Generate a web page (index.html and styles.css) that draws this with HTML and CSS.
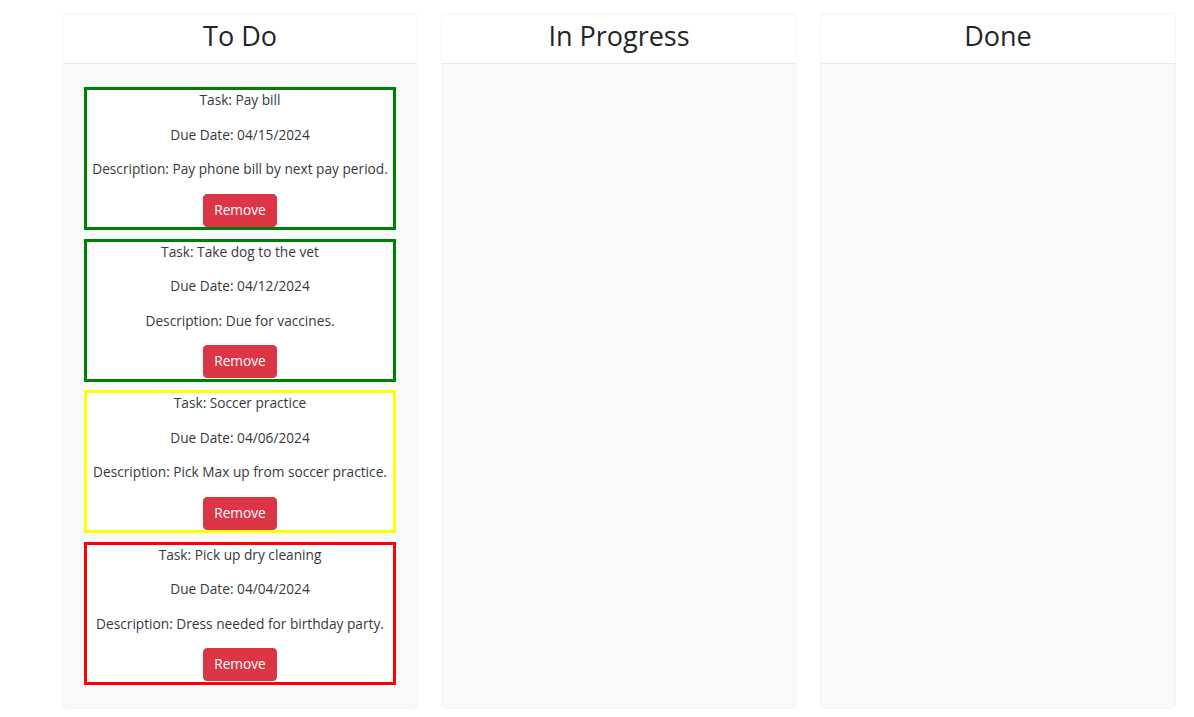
FILE: index.html
```html
<!DOCTYPE html>
<html>
<head>
<meta charset="utf-8">
<link rel="stylesheet" href="styles.css">
</head>
<body>
<div class="board">
  <section class="lane">
    <header class="lane-header"><h2>To Do</h2></header>
    <div class="lane-body">
      <article class="task task-green">
        <p>Task: Pay bill</p>
        <p>Due Date: 04/15/2024</p>
        <p>Description: Pay phone bill by next pay period.</p>
        <button class="btn-remove">Remove</button>
      </article>
      <article class="task task-green">
        <p>Task: Take dog to the vet</p>
        <p>Due Date: 04/12/2024</p>
        <p>Description: Due for vaccines.</p>
        <button class="btn-remove">Remove</button>
      </article>
      <article class="task task-yellow">
        <p>Task: Soccer practice</p>
        <p>Due Date: 04/06/2024</p>
        <p>Description: Pick Max up from soccer practice.</p>
        <button class="btn-remove">Remove</button>
      </article>
      <article class="task task-red">
        <p>Task: Pick up dry cleaning</p>
        <p>Due Date: 04/04/2024</p>
        <p>Description: Dress needed for birthday party.</p>
        <button class="btn-remove">Remove</button>
      </article>
    </div>
  </section>
  <section class="lane">
    <header class="lane-header"><h2>In Progress</h2></header>
    <div class="lane-body"></div>
  </section>
  <section class="lane">
    <header class="lane-header"><h2>Done</h2></header>
    <div class="lane-body"></div>
  </section>
</div>
</body>
</html>
```
FILE: styles.css
```css
html, body {
  margin: 0;
  padding: 0;
  background: #ffffff;
}
body {
  font-family: "Open Sans", "Noto Sans", sans-serif;
  color: #212529;
}
.board {
  display: flex;
  align-items: stretch;
  gap: 23px;
  padding: 13px 0 0 62px;
}
.lane {
  width: 356px;
  background: #f8f9fa;
  border: 1px solid rgba(0, 0, 0, 0.015);
  border-radius: 5px;
  box-sizing: border-box;
  display: flex;
  flex-direction: column;
}
.lane-header {
  height: 50px;
  box-sizing: border-box;
  padding-bottom: 4px;
  background: #ffffff;
  border-bottom: 1px solid #e7e9ec;
  border-radius: 5px 5px 0 0;
  display: flex;
  align-items: center;
  justify-content: center;
}
.lane-header h2 {
  margin: 0;
  font-size: 27px;
  font-weight: 400;
  line-height: 1.2;
  color: #212529;
}
.lane-body {
  padding: 23px 21px 23px 21px;
  display: flex;
  flex-direction: column;
  gap: 8.6px;
}
.task {
  background: #ffffff;
  border: 3px solid #008000;
  text-align: center;
  box-sizing: border-box;
  width: 312px;
  padding-bottom: 0.5px;
}
.task-green { border-color: #008000; }
.task-yellow { border-color: #ffff00; }
.task-red { border-color: #ff0000; }
.task p {
  margin: 0 0 13.8px 0;
  font-size: 13.7px;
  line-height: 20.7px;
  color: #343a40;
}
.btn-remove {
  display: inline-block;
  height: 33px;
  padding: 0 10.3px;
  background: #dc3545;
  color: #ffffff;
  border: 1px solid #dc3545;
  border-radius: 4px;
  font-family: "Open Sans", "Noto Sans", sans-serif;
  font-size: 13.7px;
  line-height: 20.7px;
  vertical-align: top;
}
```
